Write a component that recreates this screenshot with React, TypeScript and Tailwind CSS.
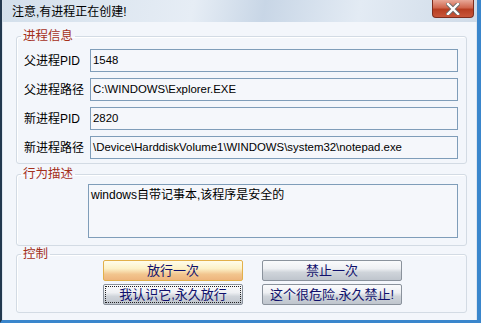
import React from "react"

const FONT = "font-['Liberation_Sans','Noto_Sans_CJK_SC',sans-serif]"

const rows = [
  { label: "父进程PID", value: "1548" },
  { label: "父进程路径", value: "C:\\WINDOWS\\Explorer.EXE" },
  { label: "新进程PID", value: "2820" },
  { label: "新进程路径", value: "\\Device\\HarddiskVolume1\\WINDOWS\\system32\\notepad.exe" },
]

function Group({ title, className, children }: { title: string; className?: string; children: React.ReactNode }) {
  return (
    <fieldset className={`mx-[13px] mr-[9px] rounded-[3px] border border-[#d3dbe4] shadow-[inset_1px_1px_0_#ffffff] pl-[7px] pr-[8px] ${className ?? ""}`}>
      <legend className="-ml-[3px] px-[2px] text-[12.5px] leading-[14px] text-[#a5301b]">{title}</legend>
      {children}
    </fieldset>
  )
}

function CloseButton() {
  return (
    <div className="flex h-[18px] w-[42px] items-center justify-center rounded-b-[4px] border border-t-0 border-[#7d2d1e] bg-[linear-gradient(#e8a898,#d0674e_45%,#b73e22_55%,#c8563a)]">
      <svg width="14" height="12" viewBox="0 0 14 12">
        <path d="M2 1 L12 11 M12 1 L2 11" stroke="#6b6b6b" strokeWidth="4.2" strokeLinecap="square" />
        <path d="M2 1 L12 11 M12 1 L2 11" stroke="#ffffff" strokeWidth="2.4" strokeLinecap="square" />
      </svg>
    </div>
  )
}

function Btn({ children, variant = "gray", focus = false }: { children: React.ReactNode; variant?: "gray" | "orange"; focus?: boolean }) {
  const skin =
    variant === "orange"
      ? "border-[#e2b04a] bg-[linear-gradient(#fffdeb,#fcf1c8_40%,#f2c58e_70%,#eeb57d)]"
      : "border-[#8a929c] bg-[linear-gradient(#fafbfc,#eef0f3_40%,#cfd4da_60%,#bfc5cd)]"
  return (
    <button
      type="button"
      className={`flex h-[21px] w-[140px] items-center justify-center rounded-[2px] border p-[2px] text-[13px] leading-none text-[#10106c] ${skin}`}
    >
      <span className={`flex h-full w-full items-center justify-center ${focus ? "outline outline-1 outline-dotted outline-[#222]" : ""}`}>
        {children}
      </span>
    </button>
  )
}

export default function App() {
  return (
    <div className={`flex h-[323px] w-[481px] flex-col border-l-2 border-r-4 border-b-[3px] border-l-[#22384f] border-r-[#3a86cc] border-b-[#3a86cc] ${FONT}`}>
      <div className="flex h-[22px] shrink-0 items-start justify-between border-l border-[#d6e0ea] bg-[linear-gradient(100deg,#d3dfeb,#e6edf5_40%,#c8d6e6_55%,#e3ebf4_75%,#cfdbe8)] pl-[9px] pr-[3px]">
        <span className="pt-[5px] text-[12px] leading-[14px] text-black">注意,有进程正在创建!</span>
        <CloseButton />
      </div>

      <div className="flex flex-1 flex-col border-l border-r border-[#dfe7f0] bg-[#f3f6fb]">
        <Group title="进程信息" className="mt-[7px] pb-[4px]">
          <div className="mt-[6px] flex flex-col gap-[6px]">
            {rows.map((r) => (
              <div key={r.label} className="flex items-center">
                <span className="w-[66px] shrink-0 text-[12px] text-black">{r.label}</span>
                <div className="flex h-[23px] flex-1 items-center border border-[#7f9db9] bg-[#f5f7fb] px-[2px] text-[11.4px] text-black">
                  {r.value}
                </div>
              </div>
            ))}
          </div>
        </Group>

        <Group title="行为描述" className="mt-[3px] pb-[7px]">
          <div className="ml-[64px] mt-[3px] h-[54px] border border-[#7f9db9] bg-[#f5f7fb] px-[2px] pt-[2px] text-[12px] leading-[16px] text-black">
            windows自带记事本,该程序是安全的
          </div>
        </Group>

        <Group title="控制" className="mt-[1px] pb-[7px]">
          <div className="-mt-[1px] ml-[79px] grid w-[299px] grid-cols-[140px_140px] gap-x-[19px] gap-y-[3px]">
            <Btn variant="orange">放行一次</Btn>
            <Btn>禁止一次</Btn>
            <Btn focus>我认识它,永久放行</Btn>
            <Btn>这个很危险,永久禁止!</Btn>
          </div>
        </Group>
      </div>
    </div>
  )
}
